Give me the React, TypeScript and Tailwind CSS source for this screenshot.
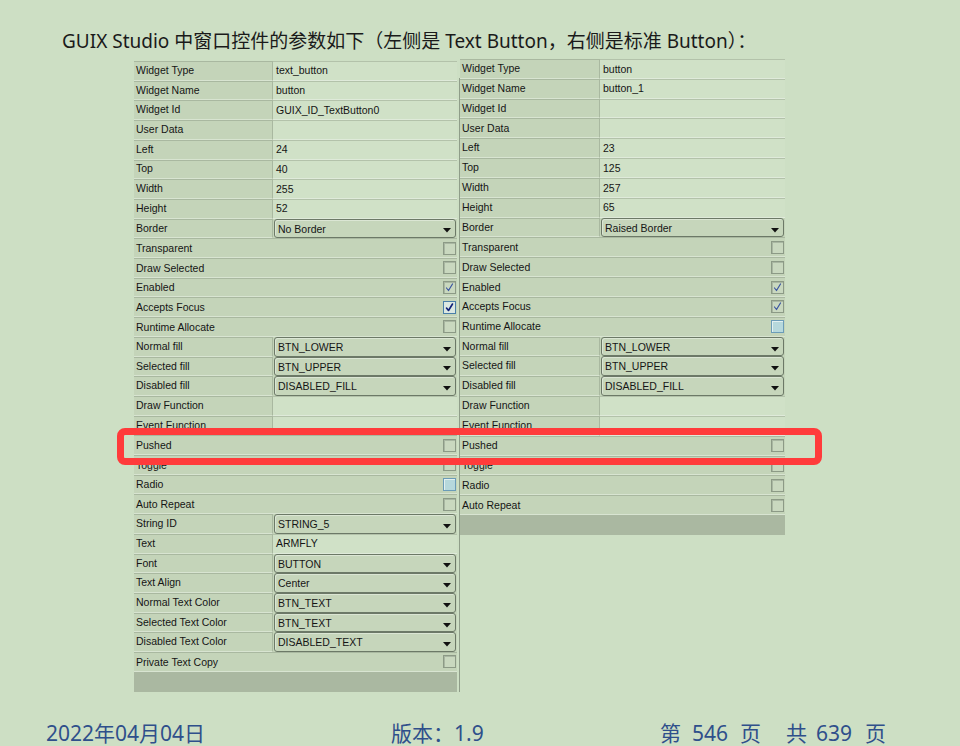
import React from "react";

type State = "off" | "on" | "focus" | "hover";
type R = { l: string; t: "v" | "d" | "c"; v?: string; s?: State };

const leftRows: R[] = [
  { l: "Widget Type", t: "v", v: "text_button" },
  { l: "Widget Name", t: "v", v: "button" },
  { l: "Widget Id", t: "v", v: "GUIX_ID_TextButton0" },
  { l: "User Data", t: "v", v: "" },
  { l: "Left", t: "v", v: "24" },
  { l: "Top", t: "v", v: "40" },
  { l: "Width", t: "v", v: "255" },
  { l: "Height", t: "v", v: "52" },
  { l: "Border", t: "d", v: "No Border" },
  { l: "Transparent", t: "c", s: "off" },
  { l: "Draw Selected", t: "c", s: "off" },
  { l: "Enabled", t: "c", s: "on" },
  { l: "Accepts Focus", t: "c", s: "focus" },
  { l: "Runtime Allocate", t: "c", s: "off" },
  { l: "Normal fill", t: "d", v: "BTN_LOWER" },
  { l: "Selected fill", t: "d", v: "BTN_UPPER" },
  { l: "Disabled fill", t: "d", v: "DISABLED_FILL" },
  { l: "Draw Function", t: "v", v: "" },
  { l: "Event Function", t: "v", v: "" },
  { l: "Pushed", t: "c", s: "off" },
  { l: "Toggle", t: "c", s: "off" },
  { l: "Radio", t: "c", s: "hover" },
  { l: "Auto Repeat", t: "c", s: "off" },
  { l: "String ID", t: "d", v: "STRING_5" },
  { l: "Text", t: "v", v: "ARMFLY" },
  { l: "Font", t: "d", v: "BUTTON" },
  { l: "Text Align", t: "d", v: "Center" },
  { l: "Normal Text Color", t: "d", v: "BTN_TEXT" },
  { l: "Selected Text Color", t: "d", v: "BTN_TEXT" },
  { l: "Disabled Text Color", t: "d", v: "DISABLED_TEXT" },
  { l: "Private Text Copy", t: "c", s: "off" },
];

const rightRows: R[] = [
  { l: "Widget Type", t: "v", v: "button" },
  { l: "Widget Name", t: "v", v: "button_1" },
  { l: "Widget Id", t: "v", v: "" },
  { l: "User Data", t: "v", v: "" },
  { l: "Left", t: "v", v: "23" },
  { l: "Top", t: "v", v: "125" },
  { l: "Width", t: "v", v: "257" },
  { l: "Height", t: "v", v: "65" },
  { l: "Border", t: "d", v: "Raised Border" },
  { l: "Transparent", t: "c", s: "off" },
  { l: "Draw Selected", t: "c", s: "off" },
  { l: "Enabled", t: "c", s: "on" },
  { l: "Accepts Focus", t: "c", s: "on" },
  { l: "Runtime Allocate", t: "c", s: "hover" },
  { l: "Normal fill", t: "d", v: "BTN_LOWER" },
  { l: "Selected fill", t: "d", v: "BTN_UPPER" },
  { l: "Disabled fill", t: "d", v: "DISABLED_FILL" },
  { l: "Draw Function", t: "v", v: "" },
  { l: "Event Function", t: "v", v: "" },
  { l: "Pushed", t: "c", s: "off" },
  { l: "Toggle", t: "c", s: "off" },
  { l: "Radio", t: "c", s: "off" },
  { l: "Auto Repeat", t: "c", s: "off" },
];

function Checkbox({ s }: { s: State }) {
  const box =
    s === "focus"
      ? "border-[#4a7fa8] bg-[#dbe8e2]"
      : s === "hover"
      ? "border-[#6b9cb8] bg-[#b6d8dc] shadow-[inset_1px_1px_0_#e2f0f0]"
      : "border-[#8c9a86] bg-[#c9d8bf] shadow-[inset_1px_1px_0_#a9b7a2]";
  const checked = s === "on" || s === "focus";
  return (
    <div className={`w-[13px] h-[13px] mr-[1px] shrink-0 border ${box} flex items-center justify-center`}>
      {checked && (
        <svg width="11" height="11" viewBox="0 0 11 11">
          <path
            d="M2.5 6 L4.5 8.5 L8.5 2"
            fill="none"
            stroke={s === "focus" ? "#0f1f78" : "#3a55a0"}
            strokeWidth={s === "focus" ? 1.6 : 1.2}
            strokeLinecap="round"
            strokeLinejoin="round"
          />
        </svg>
      )}
    </div>
  );
}

function Table({ rows, h, lw, w }: { rows: R[]; h: string; lw: string; w: string }) {
  return (
    <div className={`${w} flex flex-col`}>
      {rows.map((r, i) => {
        if (r.t === "c") {
          return (
            <div
              key={i}
              className={`${h} flex items-center bg-[#c4d4b9] border-t border-t-[#a9b8a0] border-b border-b-[#d8e4d1]`}
            >
              <span className="flex-1 pl-[2px] pt-[1px]">{r.l}</span>
              <Checkbox s={r.s as State} />
            </div>
          );
        }
        return (
          <div key={i} className={`${h} flex`}>
            <div
              className={`${lw} shrink-0 flex items-center pl-[2px] bg-[#c4d4b9] border-t border-t-[#a9b8a0] border-b border-b-[#d8e4d1] border-r border-r-[#a9b8a0]`}
            >
              {r.l}
            </div>
            {r.t === "v" ? (
              <div className="flex-1 flex items-center pl-[3px] pt-[1px] bg-[#d0e1c7] border-t border-t-[#b3c2aa] border-b border-b-[#dfeada]">
                {r.v}
              </div>
            ) : (
              <div className="flex-1 flex bg-[#c4d4b9] pl-[1px] pr-[1px]">
                <div className="flex-1 h-full flex items-center justify-between rounded-[3px] border border-[#6c7967] bg-[#c6d6bb] shadow-[inset_1px_1px_0_#dbe6d4] pl-[3px] pt-[2px]">
                  <span>{r.v}</span>
                  <svg width="8" height="5" viewBox="0 0 8 5" className="mr-[4px] mt-[3px]">
                    <path d="M0 0 H8 L4 4.5 Z" fill="#111" />
                  </svg>
                </div>
              </div>
            )}
          </div>
        );
      })}
      <div className="h-[20px] bg-[#aab8a1]" />
    </div>
  );
}

export default function App() {
  return (
    <div className="relative w-[960px] h-[746px] overflow-hidden bg-[#cddfc4]">
      <p
        className="pl-[62px] pt-[28px] text-[19px] leading-[26px] text-[#1a1a1a] whitespace-nowrap"
        style={{ fontFamily: '"Noto Sans", "Noto Sans CJK SC", sans-serif' }}
      >
        GUIX Studio 中窗口控件的参数如下（左侧是 Text Button，右侧是标准 Button）：
      </p>

      <div
        className="flex items-start pl-[134px] mt-[5px] text-[10.5px] text-[#151515]"
        style={{ fontFamily: '"Liberation Sans", Arial, sans-serif' }}
      >
        <div className="flex mt-[2px]">
          <Table rows={leftRows} h="h-[19.71px]" lw="w-[139px]" w="w-[323px]" />
          <div className="w-[2px]" />
          <div className="w-[1px] mt-[17px] bg-[#8f9d89]" />
        </div>
        <Table rows={rightRows} h="h-[19.83px]" lw="w-[140px]" w="w-[325px]" />
      </div>

      <div
        className="flex items-center pl-[46px] mt-[30px] h-[22px] text-[21px] leading-[22px] text-[#2f4f8b] whitespace-nowrap"
        style={{ fontFamily: '"Noto Sans", "Noto Sans CJK SC", sans-serif' }}
      >
        <span className="w-[345px] shrink-0">2022年04月04日</span>
        <span className="w-[269px] shrink-0">版本：1.9</span>
        <span>第</span>
        <span className="ml-[11px]">546</span>
        <span className="ml-[12px]">页</span>
        <span className="ml-[25px]">共</span>
        <span className="ml-[9px]">639</span>
        <span className="ml-[13px]">页</span>
      </div>

      <div className="absolute left-[117px] top-[428px] w-[705px] h-[37px] border-[7px] border-[#ff3b3b] rounded-[8px]" />
    </div>
  );
}
